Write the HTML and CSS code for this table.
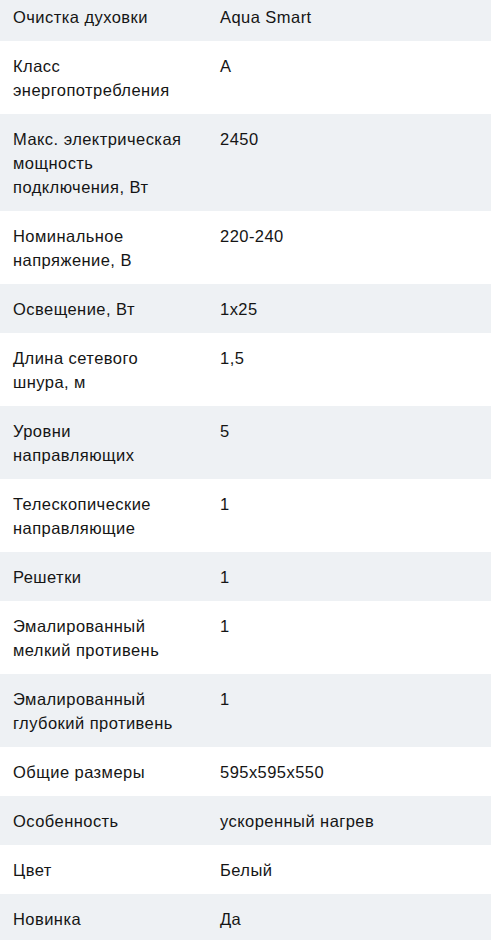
FILE: index.html
```html
<!DOCTYPE html>
<html lang="ru">
<head>
<meta charset="utf-8">
<link rel="stylesheet" href="styles.css">
</head>
<body>
<table class="specs">
<tr><td>Очистка духовки</td><td>Aqua Smart</td></tr>
<tr><td>Класс энергопотребления</td><td>A</td></tr>
<tr><td>Макс. электрическая мощность подключения, Вт</td><td>2450</td></tr>
<tr><td>Номинальное напряжение, В</td><td>220-240</td></tr>
<tr><td>Освещение, Вт</td><td>1x25</td></tr>
<tr><td>Длина сетевого шнура, м</td><td>1,5</td></tr>
<tr><td>Уровни направляющих</td><td>5</td></tr>
<tr><td>Телескопические направляющие</td><td>1</td></tr>
<tr><td>Решетки</td><td>1</td></tr>
<tr><td>Эмалированный мелкий противень</td><td>1</td></tr>
<tr><td>Эмалированный глубокий противень</td><td>1</td></tr>
<tr><td>Общие размеры</td><td>595x595x550</td></tr>
<tr><td>Особенность</td><td>ускоренный нагрев</td></tr>
<tr><td>Цвет</td><td>Белый</td></tr>
<tr><td>Новинка</td><td>Да</td></tr>
</table>
</body>
</html>
```
FILE: styles.css
```css
html, body {
  margin: 0;
  padding: 0;
  background: #ffffff;
}
body {
  font-family: "Liberation Sans", Arial, sans-serif;
  font-size: 16.5px;
  line-height: 24px;
  letter-spacing: 0.45px;
  color: #151515;
}
.specs {
  width: 100%;
  border-collapse: collapse;
  border-spacing: 0;
  margin-top: -8px;
  table-layout: fixed;
}
.specs td {
  padding: 13px 13px 12px 13px;
  vertical-align: top;
}
.specs td:first-child {
  width: 207px;
  box-sizing: border-box;
}
.specs tr:nth-child(odd) {
  background: #eef1f4;
}
```
